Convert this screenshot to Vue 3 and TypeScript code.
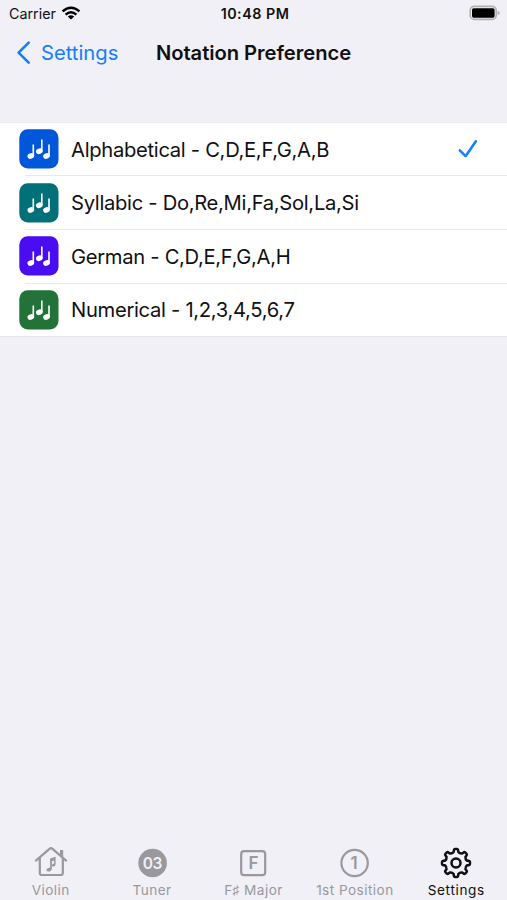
<script setup lang="ts">
import { ref } from 'vue'

interface Option {
  id: string
  label: string
  color: string
}

const options: Option[] = [
  { id: 'alpha', label: 'Alphabetical - C,D,E,F,G,A,B', color: '#0057d9' },
  { id: 'syllabic', label: 'Syllabic - Do,Re,Mi,Fa,Sol,La,Si', color: '#017078' },
  { id: 'german', label: 'German - C,D,E,F,G,A,H', color: '#4a0df2' },
  { id: 'numeric', label: 'Numerical - 1,2,3,4,5,6,7', color: '#237238' },
]
const selected = ref('alpha')

const tabs = [
  { id: 'violin', label: 'Violin' },
  { id: 'tuner', label: 'Tuner' },
  { id: 'major', label: 'F♯ Major' },
  { id: 'position', label: '1st Position' },
  { id: 'settings', label: 'Settings' },
]
const active = ref('settings')

// Eight-toothed gear outline centred on (17, 17)
function gearPath(): string {
  const at = (r: number, deg: number): string => {
    const a = (deg * Math.PI) / 180
    return `${(17 + r * Math.cos(a)).toFixed(2)} ${(17 + r * Math.sin(a)).toFixed(2)}`
  }
  let d = ''
  for (let i = 0; i < 8; i++) {
    const c = i * 45
    d += `${i ? 'L' : 'M'}${at(11.3, c - 12)}L${at(13, c - 9.5)}Q${at(14, c - 8.5)} ${at(14, c - 4)}`
    d += `L${at(14, c + 4)}Q${at(14, c + 8.5)} ${at(13, c + 9.5)}L${at(11.3, c + 12)}Q${at(9.9, c + 22.5)} ${at(11.3, c + 33)}`
  }
  return d + 'Z'
}
const gear = gearPath()
</script>

<template>
  <div class="screen">
    <div class="status">
      <div class="carrier">
        <span class="carrier-name">Carrier</span>
        <svg class="wifi" width="20" height="15" viewBox="0 0 20 15">
          <path d="M1.6 5.4Q10-2 18.4 5.4" />
          <path d="M4.6 8.6Q10 4 15.4 8.6" />
          <path class="solid" d="M10 13.6L6.8 10.5Q10 8 13.2 10.5Z" />
        </svg>
      </div>
      <span class="time">10:48 PM</span>
      <svg class="battery" width="32" height="16" viewBox="0 0 32 16">
        <rect x="1.2" y="1.4" width="26" height="13" rx="4" fill="none" stroke="#b0b0b4" stroke-width="1.6" />
        <rect x="3" y="3.2" width="22.6" height="9.5" rx="1.6" fill="#000" />
        <path d="M28.7 5.7Q30.8 6.4 30.8 8T28.7 10.3Z" fill="#b0b0b4" />
      </svg>
    </div>

    <header class="nav">
      <a class="back">
        <svg width="16" height="26" viewBox="0 0 16 26"><path d="M13.7 2.6L3.6 12.6L13.7 22.6" /></svg>
        <span>Settings</span>
      </a>
      <h1>Notation Preference</h1>
    </header>

    <ul class="list">
      <li v-for="o in options" :key="o.id" @click="selected = o.id">
        <svg class="tile" width="40" height="40" viewBox="0 0 40 40">
          <rect x=".3" y=".2" width="39.2" height="39.2" rx="8.5" :fill="o.color" />
          <g fill="#fff">
            <ellipse cx="11.8" cy="27" rx="3.4" ry="2.7" transform="rotate(-22 11.8 27)" />
            <rect x="13.5" y="15.5" width="1.6" height="11.7" />
            <ellipse cx="20.3" cy="22.3" rx="3.4" ry="2.7" transform="rotate(-22 20.3 22.3)" />
            <rect x="22" y="10.5" width="1.6" height="12" />
            <ellipse cx="27.5" cy="27" rx="3.4" ry="2.7" transform="rotate(-22 27.5 27)" />
            <rect x="29.2" y="15.5" width="1.6" height="11.7" />
          </g>
        </svg>
        <span class="label" :class="o.id">{{ o.label }}</span>
        <svg v-if="selected === o.id" class="check" width="20" height="20" viewBox="0 0 20 20">
          <path d="M1.8 11.3L7.6 17.2L17.9 2.2" />
        </svg>
      </li>
    </ul>

    <nav class="tabs">
      <a v-for="t in tabs" :key="t.id" :class="{ on: t.id === active }" @click="active = t.id">
        <svg width="34" height="34" viewBox="0 0 34 34">
          <g v-if="t.id === 'violin'">
            <path class="line" d="M1.9 14.6L15.5 2.8Q17 1.6 18.5 2.8L32.1 14.6M5.8 12V27Q5.8 29 7.8 29H26.8Q28.8 29 28.8 27V12" />
            <path class="fill" d="M26 4h3.2v7.6l-3.2-2.8z" />
            <path class="fill" d="M16.1 12.6L21.6 10.8V17.8Q21.6 20.6 18.9 20.6Q17.8 20.4 18 19.2Q18.3 17.8 20.1 17.5V14.6L17.9 15.3V22.4Q17.7 25.4 14.2 25.6Q12.2 25.6 12.5 23.5Q12.9 21.9 16.1 21.4Z" />
          </g>
          <g v-else-if="t.id === 'tuner'">
            <circle class="fill" cx="17.6" cy="17" r="14.3" />
            <text class="knock" x="17.3" y="22.7" text-anchor="middle">03</text>
          </g>
          <g v-else-if="t.id === 'major'">
            <rect class="line" x="5.2" y="5.2" width="24" height="24" rx="3" />
            <text class="glyph" x="17.4" y="23.3" text-anchor="middle">F</text>
          </g>
          <g v-else-if="t.id === 'position'">
            <circle class="line" cx="16.6" cy="17" r="13.2" />
            <text class="glyph" x="16.2" y="23.1" text-anchor="middle">1</text>
          </g>
          <g v-else>
            <path class="line thick" :d="gear" />
            <circle class="line thick" cx="17" cy="17" r="4.5" />
          </g>
        </svg>
        <span :class="t.id">{{ t.label }}</span>
      </a>
    </nav>
  </div>
</template>

<style>
body {
  background: #f1f0f6;
}
</style>

<style scoped>
.screen {
  height: 900px;
  display: flex;
  flex-direction: column;
  background: #f1f0f6;
  color: #101012;
  font-family: Inter, 'Liberation Sans', sans-serif;
  overflow: hidden;
}
.status {
  height: 27px;
  flex: none;
  display: grid;
  grid-template-columns: 1fr auto 1fr;
  align-items: center;
  padding: 0 6px 0 9px;
  font-size: 14.3px;
}
.carrier {
  display: flex;
  align-items: center;
  gap: 5px;
}
.wifi {
  margin-top: -1px;
  fill: none;
  stroke: #000;
  stroke-width: 2.5;
}
.wifi .solid {
  fill: #000;
  stroke: none;
}
.time {
  font-weight: 600;
  letter-spacing: 0.5px;
}
.battery {
  justify-self: end;
  margin-top: -1px;
}
.nav {
  height: 51px;
  flex: none;
  display: grid;
  grid-template-columns: 1fr auto 1fr;
  align-items: center;
  padding: 0 15px;
  font-size: 20.2px;
}
.back {
  display: flex;
  align-items: center;
  gap: 10px;
  color: #147efb;
}
.back path {
  fill: none;
  stroke: #147efb;
  stroke-width: 2.7;
  stroke-linecap: round;
  stroke-linejoin: round;
}
h1 {
  margin: 0;
  font-size: 20.2px;
  font-weight: 600;
  letter-spacing: -0.04px;
}
.list {
  list-style: none;
  flex: none;
  margin: 44px 0 0;
  padding: 0;
  background: #fff;
  border-top: 1px solid #ececef;
  border-bottom: 1px solid #e6e6ea;
}
.list li {
  height: 53.6px;
  box-sizing: border-box;
  display: flex;
  align-items: center;
  padding: 1px 29px 0 19px;
}
.list li:first-child {
  height: 52.4px;
  padding-top: 0;
}
.list li + li {
  background: linear-gradient(#e9e9ec, #e9e9ec) 25px 0 / 100% 1px no-repeat;
}
.label {
  margin-left: 12px;
  flex: 1;
  font-size: 20.2px;
  white-space: nowrap;
  letter-spacing: -0.3px;
}
.check path {
  fill: none;
  stroke: #147efb;
  stroke-width: 2.5;
  stroke-linecap: round;
  stroke-linejoin: round;
}
.tabs {
  margin-top: auto;
  flex: none;
  height: 54px;
  display: grid;
  grid-template-columns: repeat(5, 1fr);
}
.tabs a {
  display: flex;
  flex-direction: column;
  align-items: center;
  color: #98989d;
  font-size: 13.6px;
  line-height: 16px;
  letter-spacing: 0.45px;
  white-space: nowrap;
}
.tabs a.on {
  color: #101012;
}
.tabs a > span {
  margin-top: 2px;
}
.tabs .settings {
  letter-spacing: 0.65px;
}
.tabs svg {
  letter-spacing: 0;
}
.line {
  fill: none;
  stroke: currentColor;
  stroke-width: 2.2;
  stroke-linecap: round;
  stroke-linejoin: round;
}
.line.thick {
  stroke-width: 2.5;
}
.fill {
  fill: currentColor;
}
.knock {
  fill: #f1f0f6;
  font-size: 15.5px;
  font-weight: 600;
  letter-spacing: -0.6px;
}
.glyph {
  fill: currentColor;
  font-size: 17px;
  font-weight: 600;
}
</style>
